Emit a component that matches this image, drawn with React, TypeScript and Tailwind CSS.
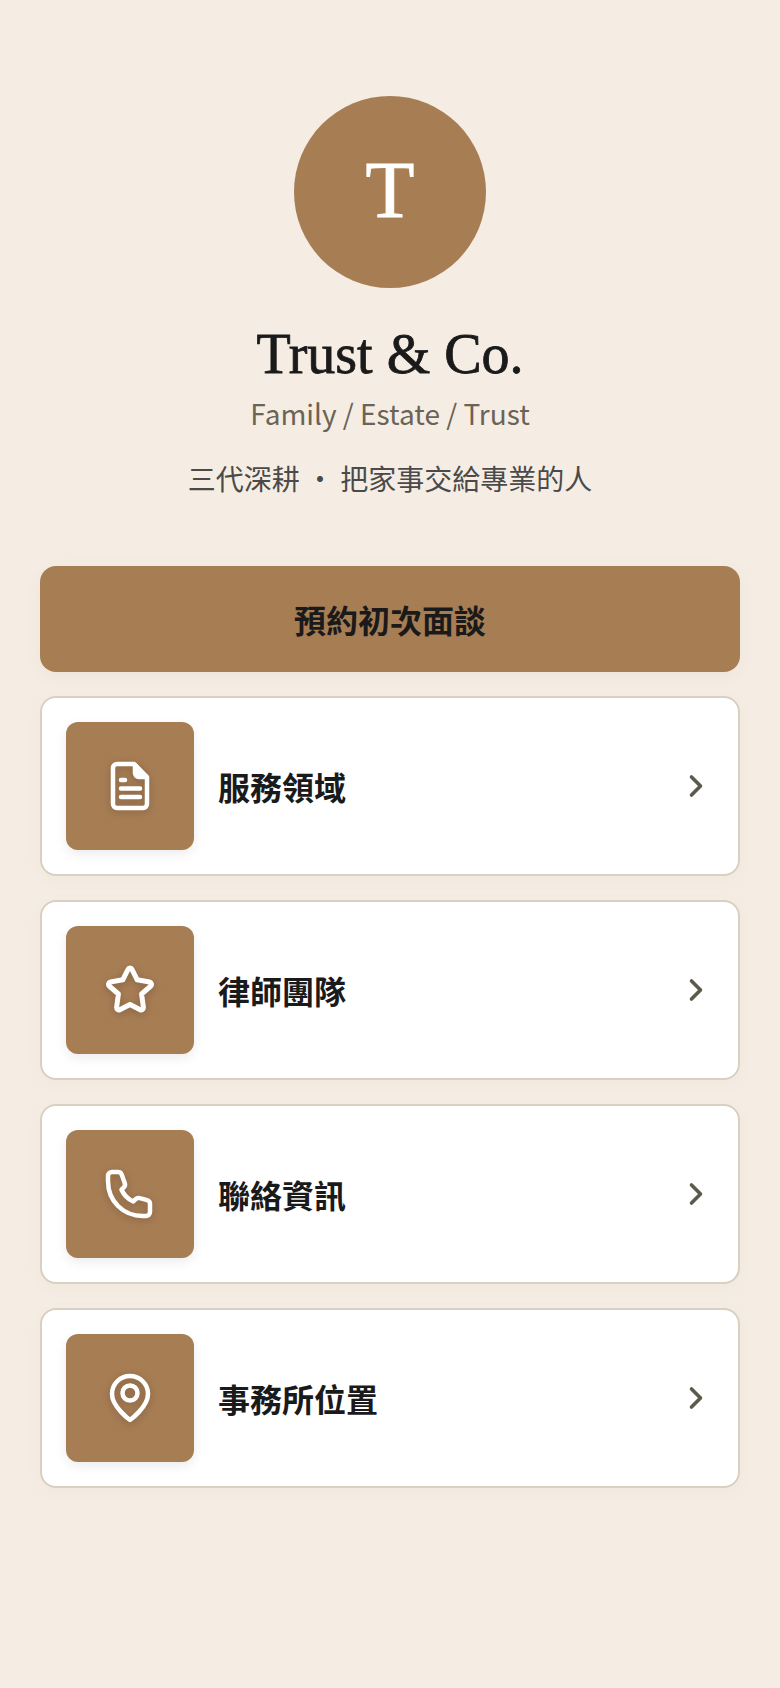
import { ChevronRight } from "lucide-react"
import type { ReactNode } from "react"

function DocIcon() {
  return (
    <svg width="64" height="64" viewBox="0 0 64 64" fill="none" stroke="currentColor" strokeWidth="4.500" strokeLinecap="round" strokeLinejoin="round">
      <path d="M19 10h17l13 13v27a4 4 0 0 1-4 4H19a4 4 0 0 1-4-4V14a4 4 0 0 1 4-4Z" />
      <path d="M37 11v8a4 4 0 0 0 4 4h7Z" fill="currentColor" />
      <path d="M23 26h4M23 34.500h19M23 43h19" />
    </svg>
  )
}

function StarIcon() {
  return (
    <svg width="64" height="64" viewBox="0 0 64 64" fill="none" stroke="currentColor" strokeWidth="5" strokeLinecap="round" strokeLinejoin="round">
      <path d="M30 11.400a2.200 2.200 0 0 1 4 0l5.200 10.400 12.400 2.200a2.400 2.400 0 0 1 1.200 4L43.600 36l1.800 13.400a2.400 2.400 0 0 1-3.200 2.400L32 46.500l-10.200 5.300a2.400 2.400 0 0 1-3.200-2.400L20.400 36l-9.200-8a2.400 2.400 0 0 1 1.200-4l12.400-2.200Z" />
    </svg>
  )
}

function PhoneIcon() {
  return (
    <svg width="64" height="64" viewBox="0 0 64 64" fill="none" stroke="currentColor" strokeWidth="4.500" strokeLinecap="round" strokeLinejoin="round">
      <path d="M14 10h6a4 4 0 0 1 3.800 2.800l3 8.400a4 4 0 0 1-1 4.200l-2.300 2.300a24 24 0 0 0 11.800 11.800l2.300-2.300a4 4 0 0 1 4.200-1l7.400 2a4 4 0 0 1 2.800 3.800V50a4 4 0 0 1-4 4h-3C25 54 10 39 10 19v-5a4 4 0 0 1 4-4Z" />
    </svg>
  )
}

function PinIcon() {
  return (
    <svg width="64" height="64" viewBox="0 0 64 64" fill="none" stroke="currentColor" strokeWidth="4.500" strokeLinecap="round" strokeLinejoin="round">
      <path d="M32 54C32 54 14 41 14 28a18 18 0 0 1 36 0C50 41 32 54 32 54Z" />
      <circle cx="32" cy="27" r="7.500" />
    </svg>
  )
}

function LinkCard({ icon, label }: { icon: ReactNode; label: string }) {
  return (
    <a className="flex items-center gap-6 rounded-2xl border-2 border-[#d9d0c2] bg-white p-6 shadow-[0_4px_16px_rgba(120,90,50,0.04)]">
      <div className="flex h-32 w-32 shrink-0 items-center justify-center rounded-xl bg-[#a77d54] text-white shadow-[0_4px_12px_rgba(0,0,0,0.08)]">
        <span className="drop-shadow-[0_2px_4px_rgba(0,0,0,0.2)]">{icon}</span>
      </div>
      <span className="flex-1 text-[32px] leading-[48px] font-bold text-[#1a1a1a]">{label}</span>
      <ChevronRight size={36} strokeWidth={2.4} className="text-[#5c5a4b]" />
    </a>
  )
}

export default function App() {
  return (
    <div className="min-h-screen bg-[#f5ede4] px-10 pt-24 font-['Noto_Sans_CJK_TC','Noto_Sans',sans-serif]">
      <header className="flex flex-col items-center">
        <div className="flex h-48 w-48 items-center justify-center rounded-full bg-[#a77d54] pb-1 font-['Liberation_Serif',serif] text-[80px] text-white [-webkit-text-stroke:1px_#ffffff]">
          T
        </div>
        <h1 className="mt-[31px] font-['Liberation_Serif',serif] text-[56px] leading-[70px] text-[#1a1a1a] [-webkit-text-stroke:0.8px_#1a1a1a]">
          Trust &amp; Co.
        </h1>
        <p className="mt-[3px] text-[28px] leading-[42px] text-[#6b6354]">Family / Estate / Trust</p>
        <p className="mt-[23px] text-[28px] leading-[42px] text-[#4a4a4a]">三代深耕 ・ 把家事交給專業的人</p>
      </header>
      <div className="mt-[67px] flex flex-col gap-6">
        <a className="flex h-[106px] items-center justify-center rounded-2xl bg-[#a77d54] text-[32px] font-bold text-[#1a1a1a] shadow-[0_4px_16px_rgba(120,90,50,0.06)]">
          預約初次面談
        </a>
        <LinkCard icon={<DocIcon />} label="服務領域" />
        <LinkCard icon={<StarIcon />} label="律師團隊" />
        <LinkCard icon={<PhoneIcon />} label="聯絡資訊" />
        <LinkCard icon={<PinIcon />} label="事務所位置" />
      </div>
    </div>
  )
}
